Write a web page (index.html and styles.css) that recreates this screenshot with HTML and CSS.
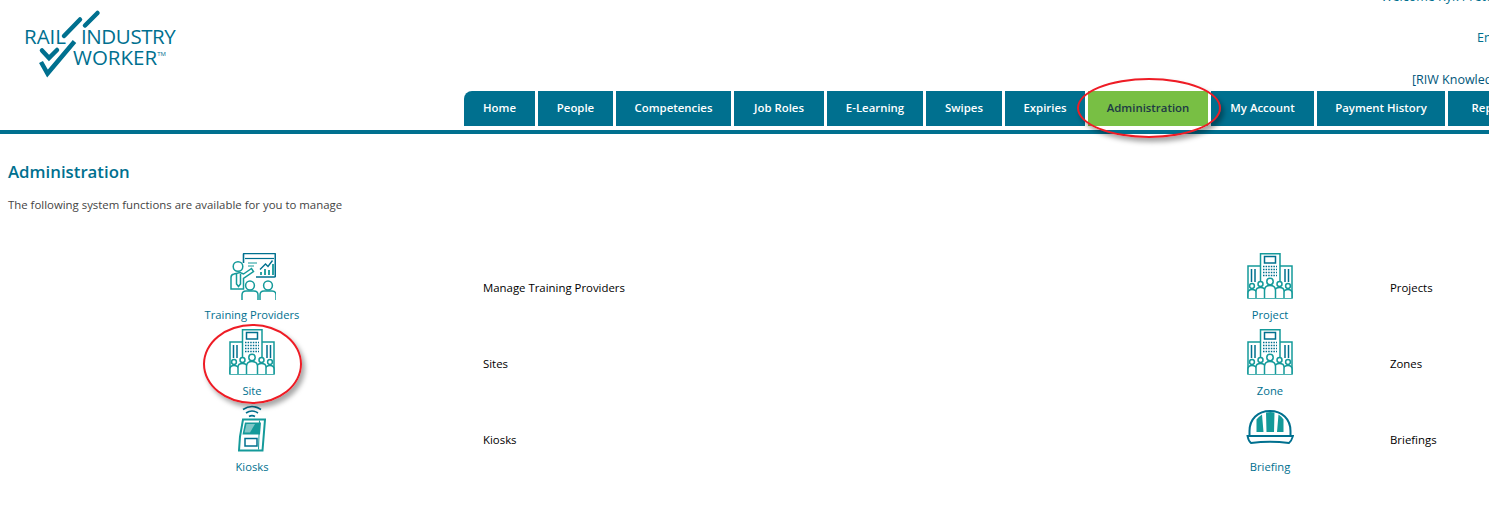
FILE: index.html
```html
<!DOCTYPE html>
<html lang="en">
<head>
    <meta charset="UTF-8">
    <meta name="viewport" content="width=device-width, initial-scale=1.0">
    <title>Administration</title>
    <link rel="stylesheet" href="styles.css">
</head>
<body>
    <svg class="icon-defs" width="0" height="0">
        <symbol id="icon-building" viewBox="0 0 46 47">
            <g fill="none" stroke="#149a9a" stroke-width="1.500">
                <path d="M13.500 13H1v32h44V13H33M13.500 30V.7h19.500V30"/>
            </g>
            <rect x="17.500" y="3.500" width="11" height="6.500" fill="none" stroke="#00708f" stroke-width="1.500"/>
            <path d="M16 13.500h14M16 16.500h14M16 19.500h14M16 22.500h14" fill="none" stroke="#00708f" stroke-width="1.500" stroke-dasharray="1.500 1.100"/>
            <path d="M4.500 16v13M8 16v13M38 16v13M41.500 16v13" fill="none" stroke="#00708f" stroke-width="1.500"/>
            <g fill="#fff" stroke="#149a9a" stroke-width="1.500">
                <circle cx="5" cy="33" r="2.400"/>
                <circle cx="41" cy="33" r="2.400"/>
                <path d="M1 45v-5q0-3.500 4-3.500t5 3.500v5M45 45v-5q0-3.500-4-3.500t-5 3.500v5"/>
                <circle cx="13.500" cy="31" r="2.500"/>
                <circle cx="32.500" cy="31" r="2.500"/>
                <path d="M9 45v-7q0-3.500 4.500-3.500t4.500 3.500v7M37 45v-7q0-3.500-4.500-3.500T28 38v7"/>
                <circle cx="23" cy="28.500" r="3.200"/>
                <path d="M17.500 45V37.500q0-5 5.500-5t5.500 5V45"/>
            </g>
        </symbol>
    </svg>

    <header class="site-header">
        <a class="brand" href="#">
            <svg class="logo" width="190" height="80" viewBox="0 0 190 80">
                <g fill="none" stroke="#00708f" stroke-width="4.500" stroke-linecap="round">
                    <path d="M64 36 80 19.500M85 25.500 97.500 13"/>
                    <path d="M42 50.500 49 58 57 50"/>
                    <path d="M41 62 47.500 73.500 74.500 41.500" stroke-linecap="butt"/>
                </g>
                <g class="logo-text" fill="#00708f">
                    <text x="24" y="44">RAIL</text>
                    <text class="logo-industry" x="81" y="44">INDUSTRY</text>
                    <text x="73" y="65">WORKER<tspan class="logo-tm" dy="-9">TM</tspan></text>
                </g>
            </svg>
        </a>
        <div class="user-links">
            <div class="user-welcome">Welcome Ryk Pretorius</div>
            <div class="user-lang">English</div>
            <div class="user-kb">[RIW Knowledge Base]</div>
        </div>
    </header>

    <nav class="main-nav">
        <a class="tab tab-first" href="#">Home</a>
        <a class="tab" href="#">People</a>
        <a class="tab" href="#">Competencies</a>
        <a class="tab" href="#">Job Roles</a>
        <a class="tab" href="#">E-Learning</a>
        <a class="tab" href="#">Swipes</a>
        <a class="tab" href="#">Expiries</a>
        <a class="tab tab-active" href="#">Administration</a>
        <a class="tab" href="#">My Account</a>
        <a class="tab" href="#">Payment History</a>
        <a class="tab" href="#">Reports</a>
    </nav>

    <main class="content">
        <h1>Administration</h1>
        <p class="intro">The following system functions are available for you to manage</p>

        <div class="func-grid">
            <a class="func-link" href="#">
                <svg width="48" height="47" viewBox="0 0 48 47">
                    <g fill="none" stroke="#149a9a" stroke-width="1.500">
                        <circle cx="10" cy="13.500" r="4.800"/>
                        <path d="M3 36V24.500q0-3 3-3.500l6-1.500 3.500 1.500 8-5.500 2 3-10 7V36ZM8.500 21v10l2 2.500 2-2.500V21"/>
                        <circle cx="22" cy="32.500" r="4.400"/>
                        <circle cx="40" cy="32.500" r="4.400"/>
                        <path d="M14 47v-5q0-4 4-4h8q4 0 4 4v5M32 47v-5q0-4 4-4h8q4 0 4 4v5"/>
                    </g>
                    <path d="M15.500 10V1.500q0-1 1-1h30q.8 0 .8 1V23q0 1-1 1H28" fill="none" stroke="#00708f" stroke-width="1.600"/>
                    <path d="M17 5.500h29" stroke="#00708f" stroke-width="1.200"/>
                    <path d="M20 10h9M20 13h6" stroke="#149a9a" stroke-width="1"/>
                    <path d="M32 16.500 37.500 11 40 13.500 44.500 7.500" fill="none" stroke="#00708f" stroke-width="1.400"/>
                    <path d="M33 22v-3M37 22v-6M41 22v-5M45 22V11" stroke="#149a9a" stroke-width="1.800"/>
                </svg>
                <span>Training Providers</span>
            </a>
            <div class="func-desc">Manage Training Providers</div>
            <a class="func-link" href="#">
                <svg width="46" height="47"><use href="#icon-building"/></svg>
                <span>Project</span>
            </a>
            <div class="func-desc">Projects</div>

            <a class="func-link" href="#">
                <svg width="46" height="47"><use href="#icon-building"/></svg>
                <span>Site</span>
            </a>
            <div class="func-desc">Sites</div>
            <a class="func-link" href="#">
                <svg width="46" height="47"><use href="#icon-building"/></svg>
                <span>Zone</span>
            </a>
            <div class="func-desc">Zones</div>

            <a class="func-link" href="#">
                <svg width="30" height="47" viewBox="0 1.500 30 47">
                    <g fill="none" stroke="#00708f" stroke-width="1.600">
                        <path d="M6 6q9-6 18 0M9 9.500q6-4 12 0M12 13q3-1.800 6 0"/>
                    </g>
                    <path d="M6 16H28L25.500 47H2L3 33Z" fill="none" stroke="#149a9a" stroke-width="2"/>
                    <path d="M8 19H24L23 31H5.500Z" fill="#149a9a"/>
                    <path d="M9.500 20.500H18L13 29H7.500Z" fill="#fff" opacity=".45"/>
                    <rect x="8" y="35" width="12" height="7.500" fill="none" stroke="#00708f" stroke-width="1.500"/>
                    <path d="M22.500 17 21.500 46" stroke="#149a9a" stroke-width="1"/>
                </svg>
                <span>Kiosks</span>
            </a>
            <div class="func-desc">Kiosks</div>
            <a class="func-link" href="#">
                <svg width="48" height="47" viewBox="0 -5 48 47">
                    <path d="M3.500 25.500V21C3.500 9 12 .9 24 .9S44.500 9 44.500 21v4.500" fill="none" stroke="#00708f" stroke-width="2"/>
                    <path d="M10.500 22V9.500Q13 6.500 16 4.500L17.500 22ZM20.500 22 20 2.500q4.500-.8 8.500 0L28 22ZM31 22 32.500 4.500q3 2 5 5V22Z" fill="#149a9a"/>
                    <path d="M1.500 26H47Q45.500 31 43 33Q24 30.500 5 33Q2.500 31 1.500 26Z" fill="#fff" stroke="#00708f" stroke-width="1.800"/>
                </svg>
                <span>Briefing</span>
            </a>
            <div class="func-desc">Briefings</div>
        </div>
    </main>

    <!-- red callouts drawn on top of the screenshot -->
    <div class="callout callout-tab"></div>
    <div class="callout callout-site"></div>
</body>
</html>
```

FILE: styles.css
```css
* { margin: 0; padding: 0; box-sizing: border-box; }
html, body { overflow: hidden; }
body { width: 1489px; height: 525px; background: #fff; font-family: "Open Sans", "Noto Sans", sans-serif; font-size: 12px; color: #000; position: relative; }
a { text-decoration: none; color: inherit; }
.icon-defs { display: block; height: 0; }

.site-header { display: flex; height: 91px; }
.brand { display: block; width: 1381px; flex: none; }
.logo { display: block; }
.logo-text { font-family: "Open Sans", sans-serif; font-size: 20.500px; font-weight: 400; }
.logo-industry { letter-spacing: -0.4px; }
.logo-tm { font-size: 6px; }
.user-links { flex: none; width: 200px; color: #00708f; font-size: 12.500px; white-space: nowrap; line-height: 18px; }
.user-welcome { margin-top: -12px; }
.user-lang { margin-top: 23px; padding-left: 96px; }
.user-kb { margin-top: 24px; padding-left: 31px; color: #00567a; }

.main-nav { display: grid; grid-template-columns: 71px 75px 115px 90px 96px 76px 80px 120px 103px 128px 90px; gap: 3px; height: 43px; padding-left: 464px; padding-bottom: 4px; border-bottom: 4px solid #00708f; width: 1700px; }
.tab { display: flex; align-items: center; justify-content: center; padding-bottom: 2px; background: #00708f; color: #fff; font-weight: 600; font-size: 11.400px; white-space: nowrap; }
.tab-first { border-top-left-radius: 8px; }
.tab-active { background: #78bf44; color: #1d3a45; }

.content { padding: 26px 8px 0; }
h1 { font-size: 16.800px; font-weight: 600; color: #00708f; line-height: 24px; }
.intro { margin-top: 13px; font-size: 11.400px; color: #444; line-height: 16px; }

.func-grid { display: grid; grid-template-columns: 462px 667px 240px auto; grid-auto-rows: 76px; margin-top: 37px; margin-left: 13px; align-items: center; }
.func-link { display: flex; flex-direction: column; align-items: center; justify-content: flex-end; height: 76px; color: #00708f; font-size: 11.200px; line-height: 16px; padding-bottom: 3px; }
.func-link svg { display: block; margin-bottom: 7px; }
.func-desc { font-size: 11.400px; padding-bottom: 2px; }

.callout { position: absolute; border: 2px solid #ee1c25; border-radius: 50%; box-shadow: 3px 4px 5px rgba(0, 0, 0, 0.35); }
.callout-tab { left: 1077px; top: 78px; width: 144px; height: 60px; }
.callout-site { left: 203px; top: 324px; width: 99px; height: 80px; }
```
